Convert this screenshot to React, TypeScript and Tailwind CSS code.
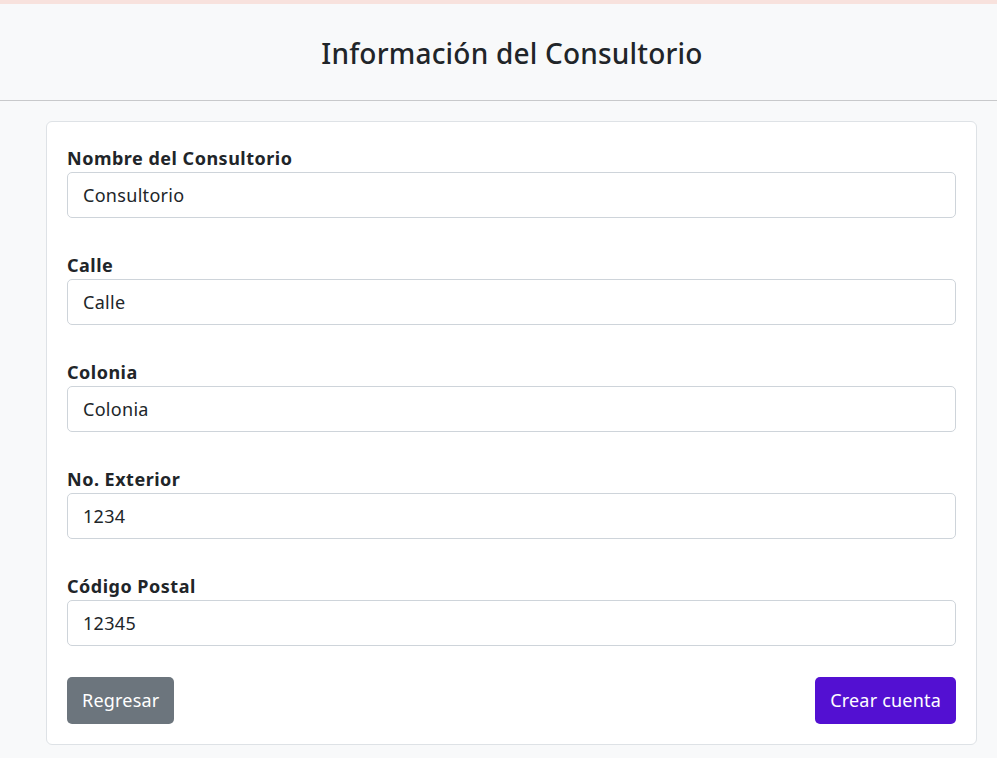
import React from "react";

const fields = [
  { label: "Nombre del Consultorio", value: "Consultorio" },
  { label: "Calle", value: "Calle" },
  { label: "Colonia", value: "Colonia" },
  { label: "No. Exterior", value: "1234" },
  { label: "Código Postal", value: "12345" },
];

const App = () => {
  return (
    <div
      className="min-h-screen bg-[#f8f9fa] text-[#212529]"
      style={{ fontFamily: '"Noto Sans", "Open Sans", sans-serif' }}
    >
      <div className="h-[4px] bg-[#f8e2dd]" />
      <div className="h-[97px] flex items-center justify-center pl-[27px] border-b border-[#c8c9cb]">
        <h3 className="text-[28px] font-medium tracking-[0.2px] mt-[2px]">
          Información del Consultorio
        </h3>
      </div>
      <div className="pt-[20px] pl-[46px] pr-[20px]">
        <div className="bg-white border border-[#dee2e6] rounded-[6px] px-[20px] pt-[24px] pb-[20px]">
          <div className="flex flex-col gap-[35px]">
            {fields.map((f) => (
              <div key={f.label}>
                <label className="block text-[18px] font-bold tracking-[0.5px] leading-[24px] mb-[2px]">
                  {f.label}
                </label>
                <input
                  readOnly
                  value={f.value}
                  className="w-full h-[46px] border border-[#ced4da] rounded-[5px] px-[15px] text-[18px] tracking-[0.3px] text-[#212529] outline-none"
                />
              </div>
            ))}
          </div>
          <div className="flex justify-between mt-[31px]">
            <button className="h-[47px] px-[15px] rounded-[5px] bg-[#6c757d] text-white text-[18px] tracking-[0.2px]">
              Regresar
            </button>
            <button className="h-[47px] px-[15px] rounded-[5px] bg-[#5310d2] text-white text-[18px] tracking-[0.2px]">
              Crear cuenta
            </button>
          </div>
        </div>
      </div>
    </div>
  );
};

export default App;
